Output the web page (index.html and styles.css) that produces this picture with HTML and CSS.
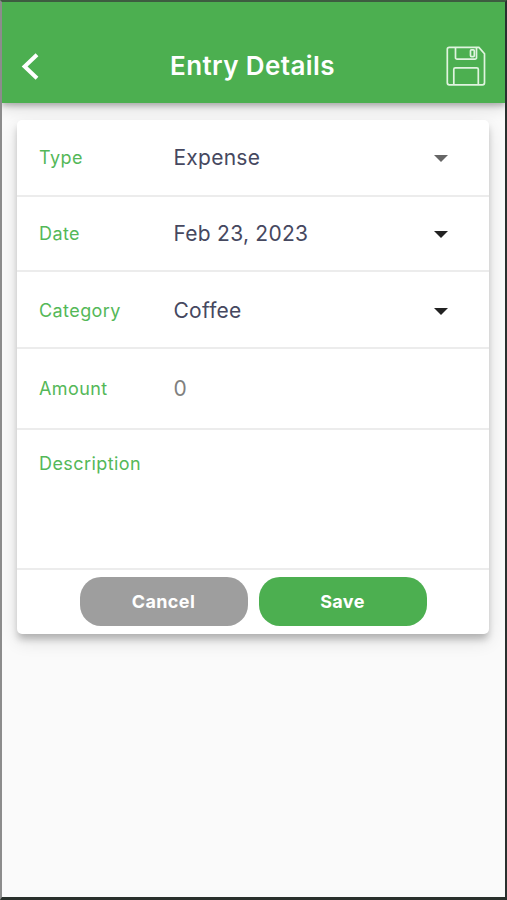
FILE: index.html
```html
<!DOCTYPE html>
<html lang="en">
<head>
<meta charset="utf-8">
<title>Entry Details</title>
<link rel="stylesheet" href="styles.css">
</head>
<body>
<div class="screen">
  <header class="app-bar">
    <svg class="back" width="20" height="30" viewBox="0 0 20 30"><path d="M17 3.700 4.600 15.500 17 27.300" fill="none" stroke="#fff" stroke-width="4"/></svg>
    <h1 class="title">Entry Details</h1>
    <svg class="disk" width="40" height="40" viewBox="0 0 40 40" fill="none" stroke="#e0f4df" stroke-width="1.7">
      <path d="M3.300 1.400h29.600l5.600 6.400v29a2 2 0 0 1-2 2H3.300a2 2 0 0 1-2-2V3.400a2 2 0 0 1 2-2z"/>
      <path d="M9.500 1.400v10.300a1.500 1.500 0 0 0 1.500 1.500h18a1.500 1.500 0 0 0 1.500-1.500V1.400"/>
      <rect x="24.500" y="3.800" width="3.800" height="6.800" rx="1"/>
      <path d="M7.800 38.500V23.300a1.500 1.500 0 0 1 1.500-1.500h21.500a1.500 1.500 0 0 1 1.500 1.500v15.200"/>
    </svg>
  </header>
  <main class="card">
    <div class="row type"><span class="label">Type</span><span class="value">Expense</span><i class="caret muted"></i></div>
    <div class="row date"><span class="label">Date</span><span class="value">Feb 23, 2023</span><i class="caret"></i></div>
    <div class="row category"><span class="label">Category</span><span class="value">Coffee</span><i class="caret"></i></div>
    <div class="row amount"><span class="label">Amount</span><span class="value hint">0</span></div>
    <div class="row description"><span class="label">Description</span></div>
    <div class="actions">
      <button class="button cancel">Cancel</button>
      <button class="button save">Save</button>
    </div>
  </main>
</div>
</body>
</html>
```

FILE: styles.css
```css
* { box-sizing: border-box; }

body {
  margin: 0;
  font-family: Inter, "Liberation Sans", sans-serif;
}

.screen {
  height: 900px;
  background: #fafafa;
  border: solid;
  border-width: 2px 2px 3px;
  border-color: #3d5c40 #29302e #29302b #8c8c8c;
  overflow: hidden;
}

.app-bar {
  height: 101px;
  padding: 27px 19px 0 18px;
  display: flex;
  align-items: center;
  justify-content: space-between;
  background: #4caf50;
  box-shadow: 0 3px 5px rgba(0, 0, 0, .22), 0 5px 14px rgba(0, 0, 0, .14);
}

.back { margin-right: 20px; }

.title {
  margin: 0;
  color: #fff;
  font-size: 26px;
  font-weight: 600;
  line-height: 32px;
  letter-spacing: .4px;
  white-space: nowrap;
  margin-right: 1px;
}

.card {
  width: 472px;
  height: 514px;
  margin: 17px 0 0 15px;
  background: #fff;
  border-radius: 5px;
  box-shadow: 0 6px 7px -1px rgba(0, 0, 0, .22), 0 7px 18px rgba(0, 0, 0, .12);
  display: flex;
  flex-direction: column;
}

.row {
  display: flex;
  align-items: center;
  padding: 0 41px 0 22px;
  border-bottom: 2px solid #ececec;
}

.type { height: 77px; padding-top: 1px; }
.date { height: 75px; padding-top: 1px; }
.category { height: 77px; padding-top: 3px; }
.amount { height: 81px; padding-top: 1px; }
.description { height: 140px; align-items: flex-start; padding-top: 23px; }

.label {
  width: 134px;
  color: #54b858;
  font-size: 18px;
  line-height: 22px;
  letter-spacing: .42px;
}

.value {
  flex: 1;
  color: #46485f;
  font-size: 21px;
  line-height: 26px;
  letter-spacing: .25px;
  padding-left: .5px;
}

.hint { color: #808080; }

.caret {
  width: 14px;
  height: 7px;
  margin-top: 1px;
  background: #222;
  clip-path: polygon(0 0, 100% 0, 50% 100%);
}

.muted { background: #666; }

.actions {
  flex: 1;
  display: flex;
  justify-content: center;
  align-items: center;
  gap: 11px;
  padding-bottom: 1px;
}

.button {
  width: 168px;
  height: 49px;
  padding: 1px 0 0;
  border: 0;
  border-radius: 21px;
  color: #fff;
  font: 700 18px/22px Inter, "Liberation Sans", sans-serif;
  letter-spacing: .4px;
}

.cancel { background: #9e9e9e; }
.save { background: #4caf50; }
```
